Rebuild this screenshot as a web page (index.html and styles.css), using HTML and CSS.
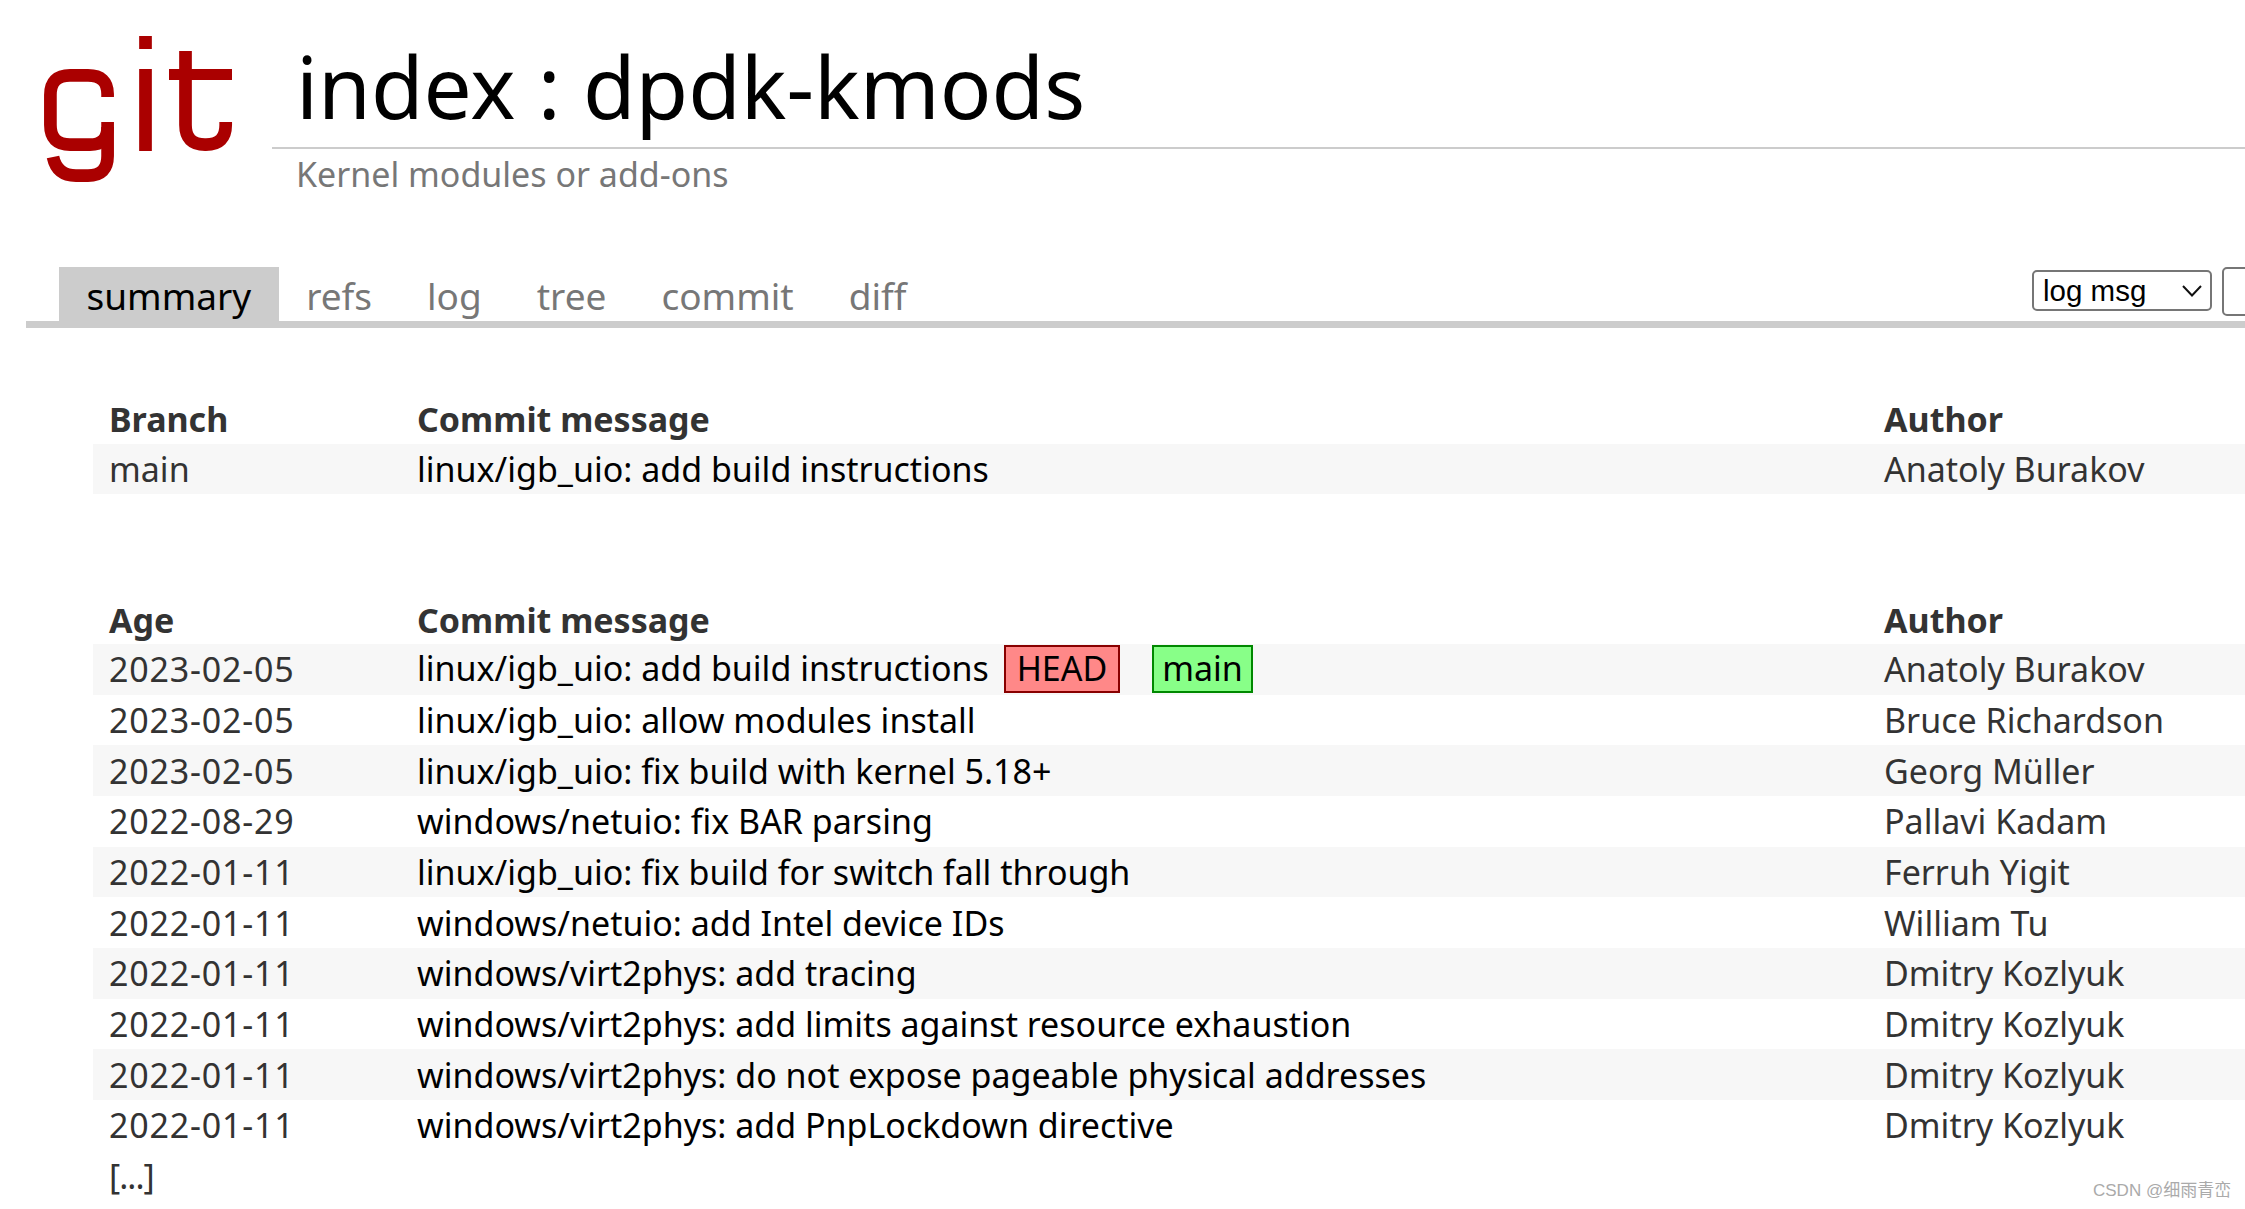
FILE: index.html
```html
<!DOCTYPE html>
<html lang="en">
<head>
<meta charset="utf-8">
<title>index : dpdk-kmods</title>
<link rel="stylesheet" href="styles.css">
</head>
<body>
<header class="site-header">
  <svg class="logo" viewBox="36 30 204 160" width="204" height="160" aria-label="git">
    <g fill="none" stroke="#a00" stroke-width="12.7">
      <path d="M107.6 97V94Q107.6 75.4 88 75.4H70Q50.4 75.4 50.4 95V125Q50.4 144.6 70 144.6H90Q107.6 144.6 107.6 127"/>
      <path d="M107.6 122V156Q107.6 175.6 88 175.6H76Q57 175.6 53 157"/>
      <path d="M145.5 36V49M145.5 69V151"/>
      <path d="M185.5 51V125Q185.5 144.6 205 144.6H206Q225.7 144.6 225.7 125V122"/>
      <path d="M169 74.5H232" stroke-width="11"/>
    </g>
  </svg>
  <div class="titles">
    <h1 class="main-title">index : dpdk-kmods</h1>
    <p class="sub-title">Kernel modules or add-ons</p>
  </div>
</header>
<nav class="tabs">
  <a class="tab active" href="#">summary</a>
  <a class="tab" href="#">refs</a>
  <a class="tab" href="#">log</a>
  <a class="tab" href="#">tree</a>
  <a class="tab" href="#">commit</a>
  <a class="tab" href="#">diff</a>
  <form class="search">
    <select class="search-type"><option>log msg</option></select>
    <input class="search-box" type="search">
  </form>
</nav>
<main class="content">
  <table class="list first">
    <thead><tr><th class="c1">Branch</th><th class="c2">Commit message</th><th>Author</th></tr></thead>
    <tbody>
      <tr><td>main</td><td class="msg">linux/igb_uio: add build instructions</td><td>Anatoly Burakov</td></tr>
    </tbody>
  </table>
  <table class="list">
    <thead><tr><th class="c1">Age</th><th class="c2">Commit message</th><th>Author</th></tr></thead>
    <tbody>
      <tr><td class="age">2023-02-05</td><td class="msg">linux/igb_uio: add build instructions <span class="deco head">HEAD</span> <span class="deco branch">main</span></td><td>Anatoly Burakov</td></tr>
      <tr><td class="age">2023-02-05</td><td class="msg">linux/igb_uio: allow modules install</td><td>Bruce Richardson</td></tr>
      <tr><td class="age">2023-02-05</td><td class="msg">linux/igb_uio: fix build with kernel 5.18+</td><td>Georg Müller</td></tr>
      <tr><td class="age">2022-08-29</td><td class="msg">windows/netuio: fix BAR parsing</td><td>Pallavi Kadam</td></tr>
      <tr><td class="age">2022-01-11</td><td class="msg">linux/igb_uio: fix build for switch fall through</td><td>Ferruh Yigit</td></tr>
      <tr><td class="age">2022-01-11</td><td class="msg">windows/netuio: add Intel device IDs</td><td>William Tu</td></tr>
      <tr><td class="age">2022-01-11</td><td class="msg">windows/virt2phys: add tracing</td><td>Dmitry Kozlyuk</td></tr>
      <tr><td class="age">2022-01-11</td><td class="msg">windows/virt2phys: add limits against resource exhaustion</td><td>Dmitry Kozlyuk</td></tr>
      <tr><td class="age">2022-01-11</td><td class="msg">windows/virt2phys: do not expose pageable physical addresses</td><td>Dmitry Kozlyuk</td></tr>
      <tr><td class="age">2022-01-11</td><td class="msg">windows/virt2phys: add PnpLockdown directive</td><td>Dmitry Kozlyuk</td></tr>
    </tbody>
    <tfoot><tr><td class="more" colspan="3">[...]</td></tr></tfoot>
  </table>
</main>
<div class="watermark">CSDN @细雨青峦</div>
</body>
</html>
```
FILE: styles.css
```css
html, body {
  margin: 0;
  padding: 0;
  height: 100%;
  overflow: hidden;
  background: #fff;
}
body {
  position: relative;
  font-family: "Noto Sans", "Noto Sans CJK SC", sans-serif;
  font-size: 34px;
  color: #333;
}
.site-header {
  display: flex;
  align-items: flex-start;
  padding: 30px 0 0 36px;
  height: 230px;
  box-sizing: border-box;
}
.logo { flex: none; margin-right: 32px; }
.titles { flex: 1; }
.main-title {
  margin: 0;
  height: 119px;
  box-sizing: border-box;
  padding-left: 24px;
  border-bottom: 2px solid #ccc;
  font-size: 85.6px;
  font-weight: 400;
  line-height: 111px;
  color: #000;
}
.sub-title {
  margin: 0;
  padding: 3px 0 0 24px;
  font-size: 34px;
  line-height: 45px;
  color: #777;
}
.tabs {
  display: flex;
  align-items: flex-end;
  height: 91px;
  margin-left: 26px;
  padding-left: 33px;
  border-bottom: 7px solid #ccc;
}
.tab {
  padding: 0 27.5px;
  height: 54px;
  line-height: 58px;
  font-size: 37px;
  color: #777;
  text-decoration: none;
}
.tab.active { background: #ccc; color: #000; }
.search {
  display: flex;
  align-items: flex-start;
  gap: 10px;
  margin: 0 -60px 0 auto;
  height: 70px;
  padding-top: 16px;
  box-sizing: border-box;
}
.search-type {
  appearance: none;
  width: 180px;
  height: 41px;
  margin-top: 3px;
  padding: 0 0 0 9px;
  font: 29.5px "Liberation Sans", sans-serif;
  color: #000;
  background: #fff url("data:image/svg+xml,%3Csvg xmlns='http://www.w3.org/2000/svg' width='20' height='12'%3E%3Cpath d='M1 1l9 9.5L19 1' fill='none' stroke='%23111' stroke-width='2'/%3E%3C/svg%3E") no-repeat right 8px center;
  border: 2px solid #767676;
  border-radius: 5px;
}
.search-box {
  width: 83px;
  height: 49px;
  box-sizing: border-box;
  border: 2px solid #767676;
  border-radius: 5px;
  background: #fff;
}
.content { padding: 65px 0 0 93px; }
.list {
  width: 100%;
  table-layout: fixed;
  border-collapse: collapse;
}
.first { margin-bottom: 99px; }
.list th, .list td {
  box-sizing: border-box;
  height: 50.67px;
  padding: 0 16px;
  text-align: left;
  white-space: nowrap;
  line-height: 1;
}
.list th { font-weight: 700; padding: 2px 16px 0; }
.c1 { width: 308px; }
.c2 { width: 1467px; }
.list tbody tr:nth-child(odd) { background: #f7f7f7; }
.list .age { letter-spacing: .8px; }
.list .more { letter-spacing: -1px; }
.msg { color: #000; }
.deco {
  display: inline-block;
  box-sizing: border-box;
  height: 48px;
  line-height: 43px;
  margin-left: 6px;
  padding: 0 11px;
  border: 2px solid;
  color: #000;
}
.deco.branch { margin-left: 23px; padding: 0 8px; }
.head { background: #f88; border-color: #800; }
.branch { background: #8f8; border-color: #080; }
.watermark {
  position: absolute;
  left: 2093px;
  top: 1176px;
  font: 17px "Liberation Sans", "Noto Sans CJK SC", sans-serif;
  color: #aaa;
}
```
